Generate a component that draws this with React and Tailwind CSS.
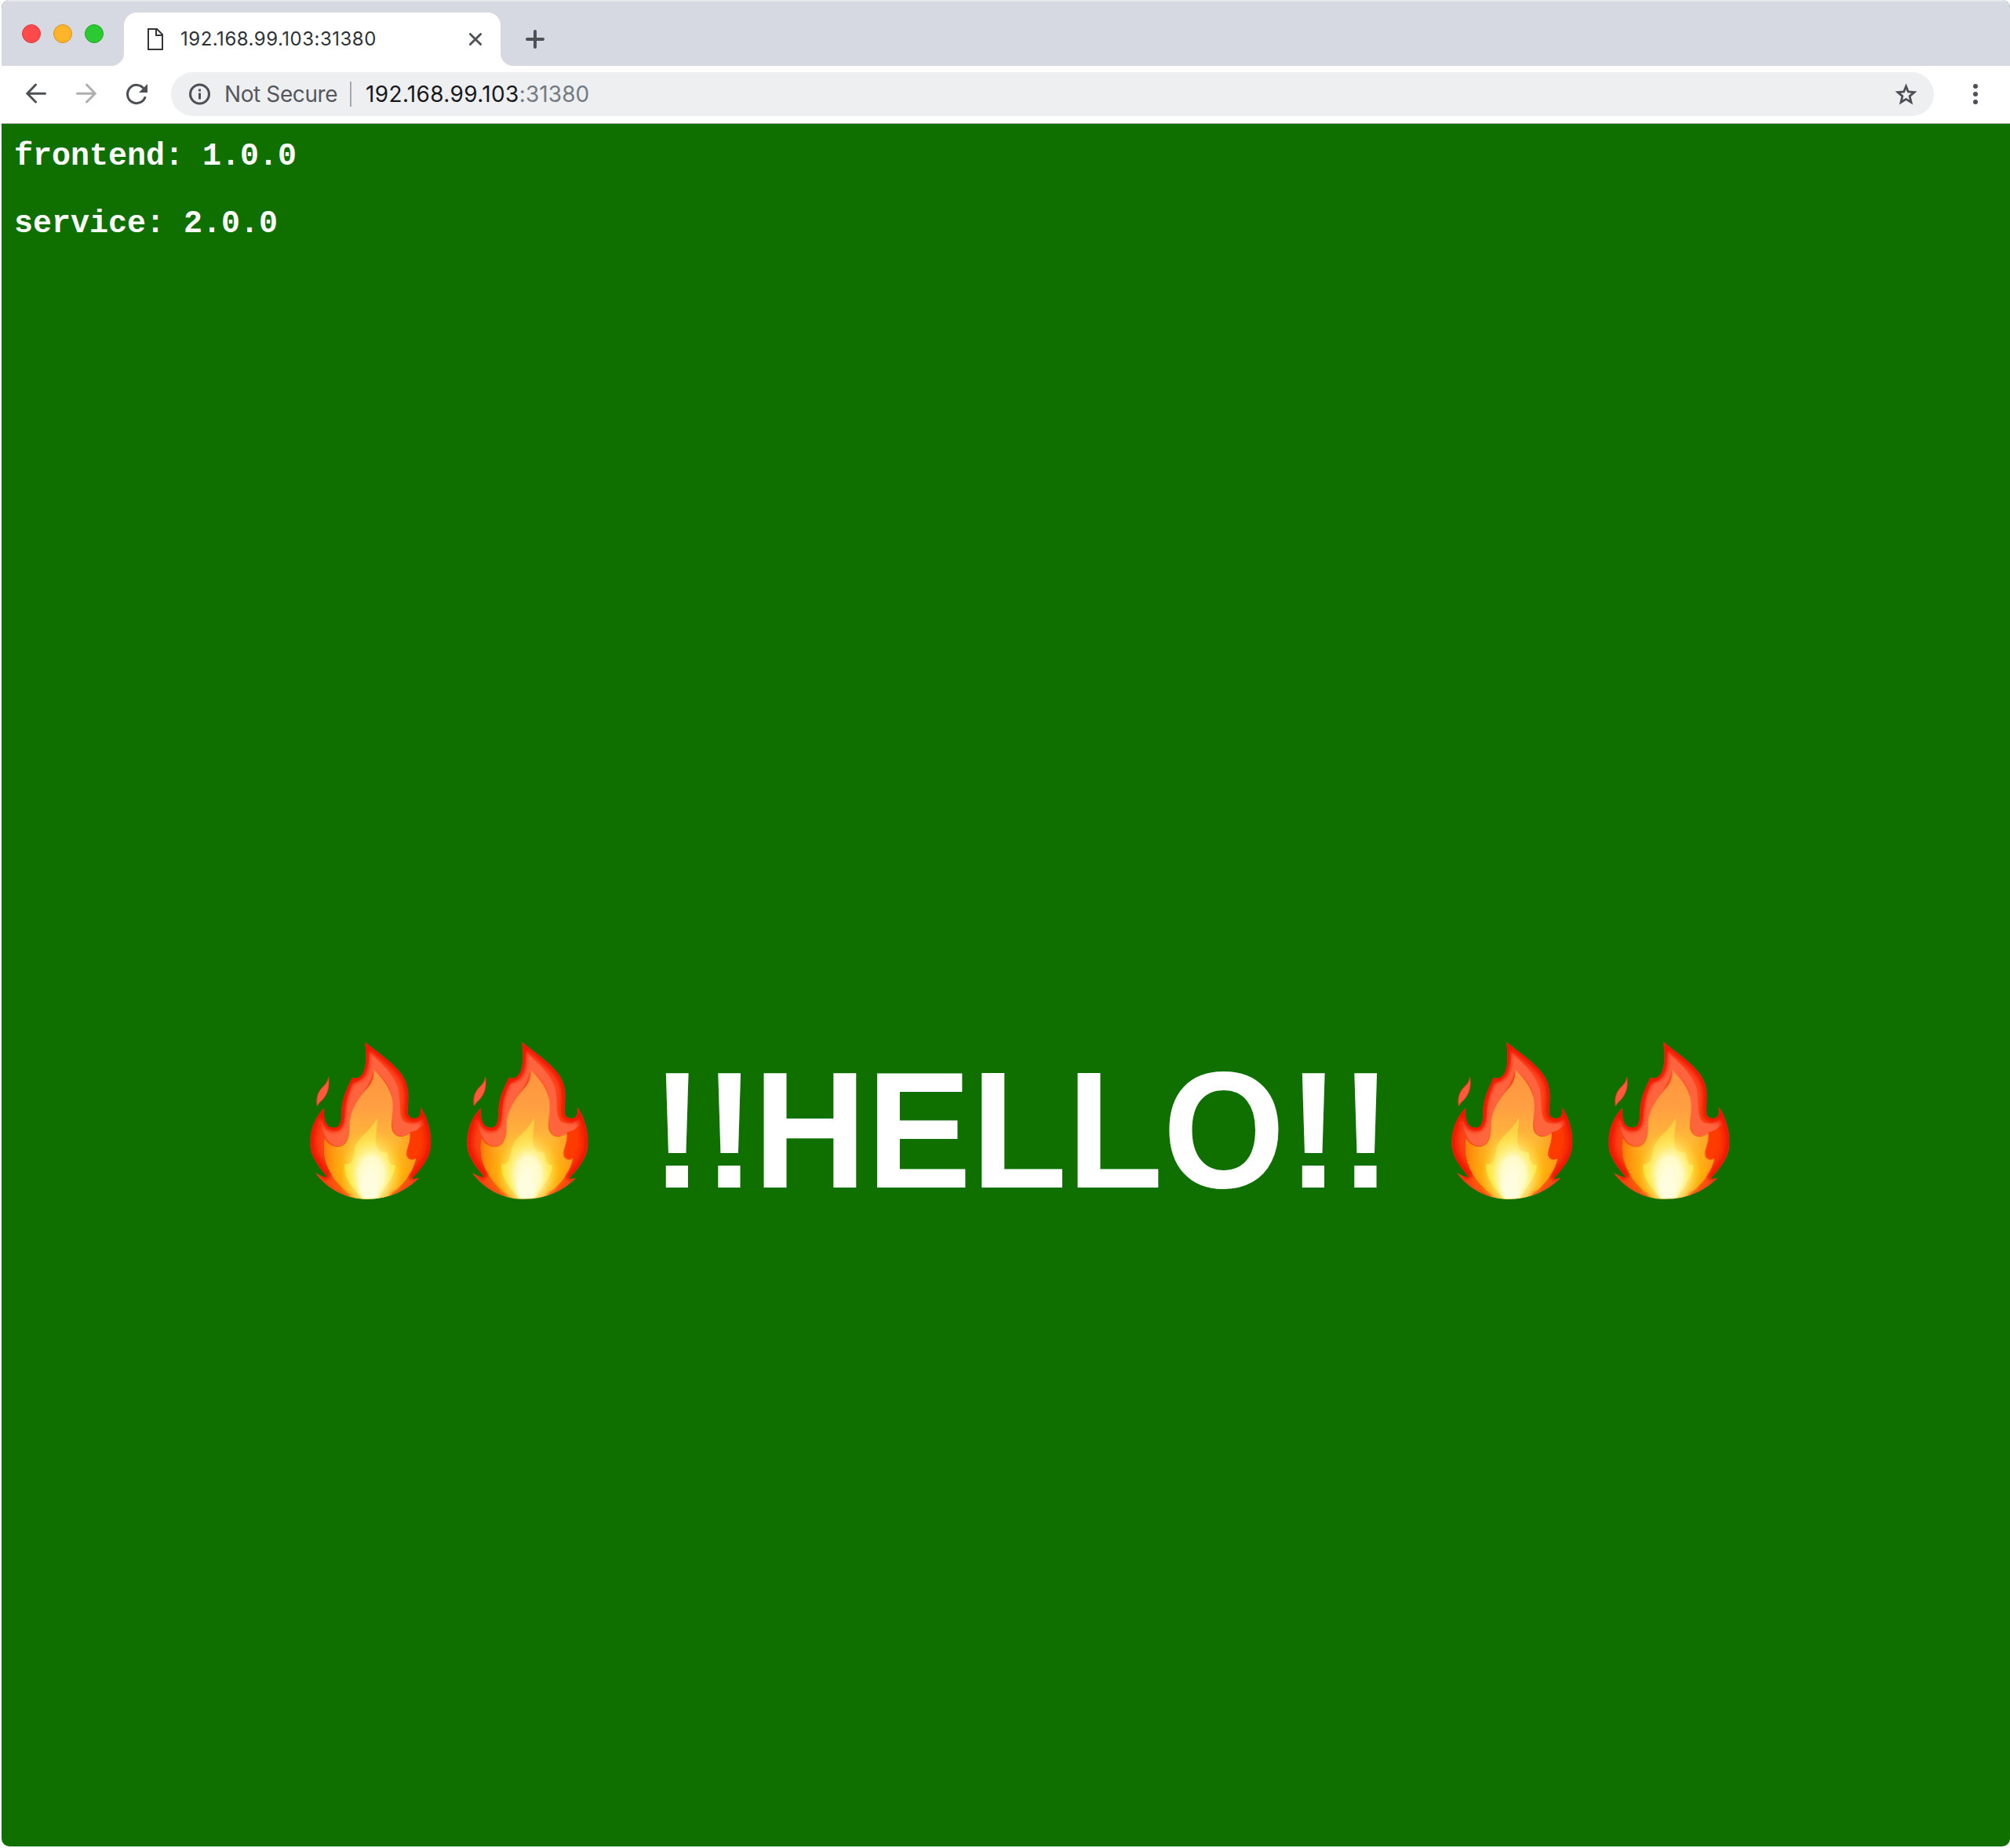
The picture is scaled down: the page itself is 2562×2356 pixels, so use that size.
import React from "react";

function Flame() {
  return (
    <svg viewBox="0 0 600 720" className="h-[240px] w-[200px] shrink-0">
      <defs>
        <radialGradient id="outer" gradientUnits="userSpaceOnUse" cx="305" cy="560" r="440" gradientTransform="translate(305 560) scale(0.62 1) translate(-305 -560)">
          <stop offset="0.2" stopColor="#ff9a00" />
          <stop offset="0.42" stopColor="#f8640a" />
          <stop offset="0.62" stopColor="#fb4410" />
          <stop offset="1" stopColor="#ff4420" />
        </radialGradient>
        <linearGradient id="mid" gradientUnits="userSpaceOnUse" x1="0" y1="160" x2="0" y2="650">
          <stop offset="0" stopColor="#ff9440" />
          <stop offset="0.3" stopColor="#ff9f42" />
          <stop offset="0.55" stopColor="#ffb838" />
          <stop offset="0.8" stopColor="#ffbf0c" />
          <stop offset="1" stopColor="#f99a00" />
        </linearGradient>
        <linearGradient id="side" gradientUnits="userSpaceOnUse" x1="125" y1="0" x2="482" y2="0">
          <stop offset="0" stopColor="#ff7400" stopOpacity="0.95" />
          <stop offset="0.3" stopColor="#ff9a10" stopOpacity="0" />
          <stop offset="0.75" stopColor="#ff9a10" stopOpacity="0" />
          <stop offset="1" stopColor="#ff8a10" stopOpacity="0.8" />
        </linearGradient>
        <linearGradient id="core" gradientUnits="userSpaceOnUse" x1="0" y1="345" x2="0" y2="655">
          <stop offset="0" stopColor="#ffcc40" />
          <stop offset="0.45" stopColor="#ffe04c" />
          <stop offset="1" stopColor="#ffe600" />
        </linearGradient>
        <radialGradient id="glow" gradientUnits="userSpaceOnUse" cx="310" cy="565" r="150" gradientTransform="translate(310 565) scale(0.8 1.15) translate(-310 -565)">
          <stop offset="0" stopColor="#fffee4" />
          <stop offset="0.4" stopColor="#fffcce" stopOpacity="0.95" />
          <stop offset="0.7" stopColor="#fff27a" stopOpacity="0.5" />
          <stop offset="1" stopColor="#ffe040" stopOpacity="0" />
        </radialGradient>
        <filter id="soft" x="-20%" y="-20%" width="140%" height="140%">
          <feGaussianBlur stdDeviation="7" />
        </filter>
        <filter id="slight" x="-20%" y="-20%" width="140%" height="140%">
          <feGaussianBlur stdDeviation="2" />
        </filter>
        <clipPath id="body">
          <path d="M286 56C330 92 390 130 425 178C462 230 449 278 449 325C450 350 484 356 496 335C501 325 497 315 498 305C518 334 538 385 538 437C538 500 502 535 466 578C474 580 482 578 492 576C444 622 383 656 290 656C205 656 137 612 96 556C112 566 126 573 142 573C112 532 76 496 76 440C76 384 98 340 128 308C127 345 132 372 155 382C181 388 195 374 196 335C194 275 214 239 236 192C255 200 273 187 281 167C293 135 290 96 286 56Z" />
        </clipPath>
      </defs>
      <path d="M146 191C150 222 146 246 128 270C118 282 109 287 103 300C98 268 106 246 124 228C135 217 143 208 146 191Z" fill="#ff5a3c" stroke="#ee3a20" strokeWidth="3" />
      <g clipPath="url(#body)">
        <rect x="60" y="40" width="490" height="630" fill="url(#outer)" />
        <g filter="url(#slight)">
          <path d="M300 90C340 130 392 170 412 230C425 280 410 345 440 362C470 372 500 365 505 340L512 380C490 405 440 420 405 412C375 380 400 300 385 250C370 205 340 180 318 162C310 220 262 260 240 320C225 370 235 420 200 450C165 462 140 440 128 400C116 380 118 350 124 330C130 380 160 400 190 394C215 360 205 290 235 215C262 215 296 180 300 90Z" fill="#ff6a46" opacity="0.85" />
          <path d="M506 372C526 410 520 470 485 505C455 510 440 490 455 450C462 420 452 405 460 400C480 396 492 388 506 372Z" fill="#ff3a05" />
        </g>
        <path d="M498 305C518 334 538 385 538 437C538 500 502 535 466 578M142 573C112 532 76 496 76 440C76 410 82 385 92 362" fill="none" stroke="#f02000" strokeWidth="60" opacity="0.55" filter="url(#soft)" />
        <g filter="url(#slight)">
          <path d="M318 160C345 186 378 222 389 268C400 320 378 370 392 398C405 425 438 420 457 405C462 440 438 470 445 492C453 510 470 508 480 500C470 560 420 622 345 660H265C195 622 112 545 132 425C142 446 165 458 188 456C222 450 228 412 227 370C228 315 262 268 300 226C316 206 322 182 318 160Z" fill="url(#mid)" />
          <path d="M392 398C405 425 438 420 457 405C462 440 438 470 445 492C453 510 470 508 480 500C470 560 420 622 345 660H265C195 622 112 545 132 425C142 446 165 458 188 456C222 450 228 412 227 370L392 370Z" fill="url(#side)" />
          <path d="M332 346C336 380 318 430 334 462C346 482 366 472 372 482C374 512 382 528 402 526C400 570 362 608 334 660H278C248 620 202 578 208 522C236 526 242 505 245 470C254 420 306 400 332 346Z" fill="url(#core)" />
        </g>
        <ellipse cx="310" cy="565" rx="122" ry="175" fill="url(#glow)" />
        <path d="M290 560C330 580 350 610 330 660H280C262 630 250 600 290 560Z" fill="#fffde0" filter="url(#soft)" />
        <path d="M286 56C330 92 390 130 425 178C462 230 449 278 449 325C450 350 484 356 496 335C501 325 497 315 498 305C518 334 538 385 538 437C538 500 502 535 466 578M142 573C112 532 76 496 76 440C76 384 98 340 128 308C127 345 132 372 155 382C181 388 195 374 196 335C194 275 214 239 236 192C255 200 273 187 281 167C293 135 290 96 286 56" fill="none" stroke="#ee1600" strokeWidth="28" filter="url(#soft)" />
        <path d="M96 558C137 612 180 640 225 648M490 577C450 618 420 630 385 642" fill="none" stroke="#f0421c" strokeWidth="12" filter="url(#soft)" />
      </g>
    </svg>
  );
}

function TabStrip() {
  return (
    <div className="flex h-[84px] bg-[#d6d9e1] shadow-[inset_0_2px_0_#e6e9ec]">
      <div className="flex h-full w-[156px] gap-4 pt-[31px] pl-[26px]">
        <div className="size-6 rounded-full border border-[#e0383c] bg-[#ff494a]" />
        <div className="size-6 rounded-full border border-[#d99020] bg-[#ffb429]" />
        <div className="size-6 rounded-full border border-[#1fa528] bg-[#2bc932]" />
      </div>
      <div className="relative mt-4 flex h-[68px] w-[480px] items-center rounded-t-[16px] bg-white">
        <svg viewBox="0 0 16 16" className="absolute bottom-0 -left-4 size-4 fill-white">
          <path d="M16 0V16H0A16 16 0 0 0 16 0Z" />
        </svg>
        <svg viewBox="0 0 16 16" className="absolute -right-4 bottom-0 size-4 fill-white">
          <path d="M0 0V16H16A16 16 0 0 1 0 0Z" />
        </svg>
        <svg viewBox="0 0 20 28" className="ml-[30px] h-7 w-5 shrink-0 fill-none stroke-[#35363a] stroke-2">
          <path d="M1 1H12L19 8V27H1ZM11 1V9H19" />
        </svg>
        <span className="ml-[22px] w-[260px] text-[24px] leading-8 tracking-[0.5px] whitespace-nowrap text-[#2f3237]">192.168.99.103:31380</span>
        <svg viewBox="0 0 16 16" className="absolute top-[26px] left-[440px] size-4 fill-none stroke-[#4d5156]" strokeWidth="2.8" strokeLinecap="round">
          <path d="M1.4 1.4L14.6 14.6M14.6 1.4L1.4 14.6" />
        </svg>
      </div>
      <svg viewBox="0 0 24 24" className="mt-[38px] ml-8 size-6 fill-none stroke-[#4d5156]" strokeWidth="4" strokeLinecap="round">
        <path d="M12 2V22M2 12H22" />
      </svg>
    </div>
  );
}

function Toolbar() {
  return (
    <div className="flex h-[74px] items-start border-b border-[#a9aba9] bg-white pt-2">
      <svg viewBox="0 0 26 26" className="mt-[14px] ml-[31px] h-[26px] w-[26px] shrink-0 fill-none stroke-[#4d5156]" strokeWidth="3" strokeLinecap="round">
        <path d="M24.5 13.3H2M12.5 2L1.8 13.3L12.5 24" />
      </svg>
      <svg viewBox="0 0 26 26" className="mt-[14px] ml-[38px] h-[26px] w-[26px] shrink-0 fill-none stroke-[#adafb1]" strokeWidth="3" strokeLinecap="round">
        <path d="M1.5 13.3H24M13.5 2L24.2 13.3L13.5 24" />
      </svg>
      <svg viewBox="0 0 28 28" className="mt-[14px] ml-[37px] h-7 w-7 shrink-0 fill-none stroke-[#4d5156]" strokeWidth="3">
        <path d="M25.2 17.3A11.6 11.6 0 1 1 23.5 7.2" />
        <path d="M28 1V12H17Z" className="fill-[#4d5156] stroke-none" />
      </svg>
      <div className="ml-[30px] flex h-14 w-[2247px] items-center rounded-full bg-[#eeeff1]">
        <svg viewBox="0 0 28 28" className="ml-[23px] size-7 shrink-0 fill-none stroke-[#4d5156]" strokeWidth="3">
          <circle cx="13.5" cy="14" r="12" />
          <path d="M13.5 12.5V20.5M13.5 7.5V10.5" />
        </svg>
        <span className="ml-[17px] w-[143px] text-[28px] tracking-[-0.4px] whitespace-nowrap text-[#55585e]">Not Secure</span>
        <div className="ml-[17px] h-8 w-[2px] bg-[#a6a8ab]" />
        <span className="ml-[18px] text-[28px] tracking-[0.35px] whitespace-nowrap text-[#17191c]">
          192.168.99.103<span className="tracking-[0.1px] text-[#757b82]">:31380</span>
        </span>
        <svg viewBox="0 0 29 29" className="mr-[21px] ml-auto size-[29px] shrink-0 fill-none stroke-[#4d5156]" strokeWidth="2.8">
          <path d="M14.5 4L17.3 11L25 11.6L19.1 16.6L21 24.4L14.5 20.3L8 24.4L9.9 16.6L4 11.6L11.7 11Z" />
        </svg>
      </div>
      <svg viewBox="0 0 6 26" className="mt-[15px] ml-[50px] h-[26px] w-[6px] shrink-0 fill-[#4d5156]">
        <circle cx="3" cy="3" r="3" />
        <circle cx="3" cy="13" r="3" />
        <circle cx="3" cy="23" r="3" />
      </svg>
    </div>
  );
}

export default function App() {
  return (
    <div className="h-[2356px] w-[2562px] overflow-hidden bg-white pl-[2px] font-['Inter',sans-serif]">
      <div className="flex h-[2354px] w-[2560px] flex-col overflow-hidden rounded-[10px] bg-[#0f7000]">
        <TabStrip />
        <Toolbar />
        <main className="flex flex-1 flex-col text-white">
          <pre className="mt-5 h-[1132px] pl-4 font-['Liberation_Mono',monospace] text-[40px] leading-[43px] font-bold">{"frontend: 1.0.0\n\nservice: 2.0.0"}</pre>
          <div className="flex h-[240px] items-start pl-[368px]">
            <Flame />
            <Flame />
            <h1 className="w-[1055px] origin-[50%_204px] translate-y-px scale-y-[1.06] pl-[57px] font-['Liberation_Sans',sans-serif] text-[200px] leading-[268px] font-bold whitespace-nowrap">
              <span className="mr-[-3px] ml-[3px]">!!</span>HELLO<span className="ml-[3px]">!!</span>
            </h1>
            <Flame />
            <Flame />
          </div>
        </main>
      </div>
    </div>
  );
}
